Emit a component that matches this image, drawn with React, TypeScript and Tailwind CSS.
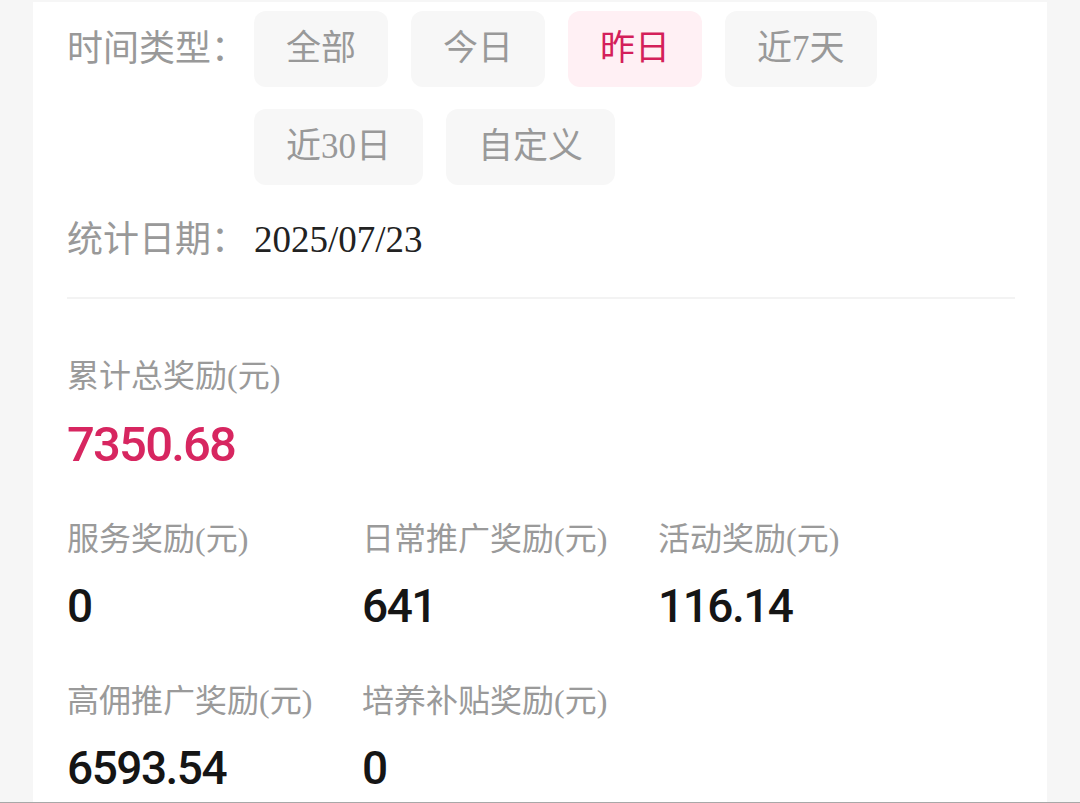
import React from "react";

const labelFont = { fontFamily: '"Liberation Serif", "Noto Sans CJK SC", serif' };

const TIME_TYPES = ["全部", "今日", "昨日", "近7天", "近30日", "自定义"];

function Stat({ label, value, red }: { label: string; value: string; red?: boolean }) {
  return (
    <div className="flex flex-col">
      <div className="h-[40px] leading-[40px] text-[32px] text-[#9a9a9a] whitespace-nowrap">{label}</div>
      <div
        className={
          red
            ? "mt-[21px] h-[56px] leading-[56px] text-[49px] font-medium text-[#d72660] font-['Roboto',sans-serif] tracking-[-1.8px]"
            : "mt-[20px] h-[54px] leading-[54px] text-[46px] font-medium text-[#151515] font-['Roboto',sans-serif] tracking-[-1.5px]"
        }
      >
        {value}
      </div>
    </div>
  );
}

export default function App() {
  return (
    <div className="h-[803px] w-full flex flex-col bg-[#f6f6f6] overflow-hidden" style={labelFont}>
      <div className="flex-1 pt-[2px] px-[33px] overflow-hidden">
        <div className="h-full bg-white px-[34px] pt-[9px] overflow-hidden">
          {/* time type */}
          <div className="flex">
            <div className="w-[187px] shrink-0 h-[76px] flex items-center text-[36px] text-[#999] whitespace-nowrap">
              时间类型：
            </div>
            <div className="flex flex-wrap gap-x-[23px] gap-y-[22px] w-[700px]">
              {TIME_TYPES.map((t) => (
                <div
                  key={t}
                  className={
                    t === "昨日"
                      ? "h-[76px] px-[32px] rounded-[12px] flex items-center text-[35px] bg-[#fff0f4] text-[#d41f5a]"
                      : "h-[76px] px-[32px] rounded-[12px] flex items-center text-[35px] bg-[#f7f7f7] text-[#999]"
                  }
                >
                  {t}
                </div>
              ))}
            </div>
          </div>

          {/* date */}
          <div className="flex mt-[30px] h-[50px] items-center">
            <div className="w-[187px] shrink-0 text-[36px] text-[#999] whitespace-nowrap">统计日期：</div>
            <div className="text-[37px] text-[#222]">2025/07/23</div>
          </div>

          <div className="mt-[32px] h-[2px] bg-[#f3f3f3] mr-[-2px]" />

          {/* total */}
          <div className="mt-[57px]">
            <Stat label="累计总奖励(元)" value="7350.68" red />
          </div>

          <div className="mt-[46px] grid grid-cols-[295px_296px_1fr] gap-y-[48px]">
            <Stat label="服务奖励(元)" value="0" />
            <Stat label="日常推广奖励(元)" value="641" />
            <Stat label="活动奖励(元)" value="116.14" />
            <Stat label="高佣推广奖励(元)" value="6593.54" />
            <Stat label="培养补贴奖励(元)" value="0" />
          </div>
        </div>
      </div>
      <div className="h-[1px] bg-[#a8a8a8]" />
    </div>
  );
}
